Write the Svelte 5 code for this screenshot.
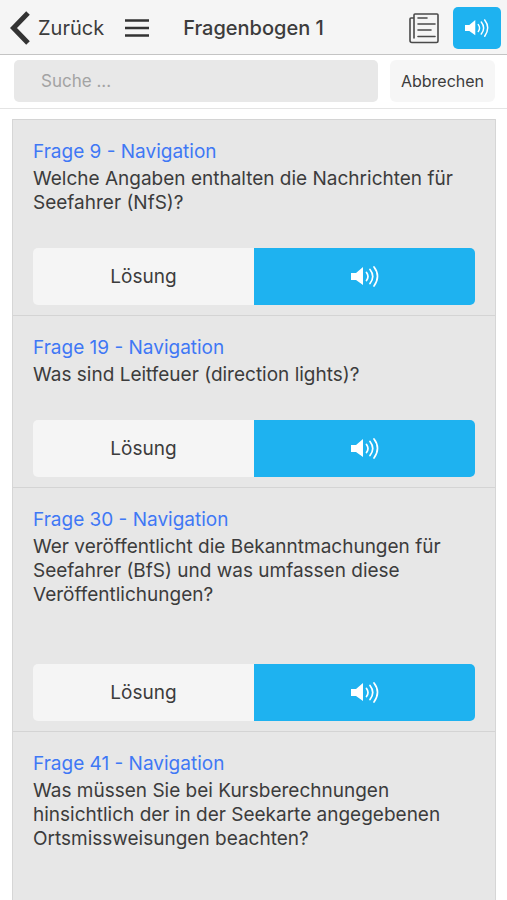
<script>
    let search = $state('');

    const questions = [
        { id: 9, topic: 'Navigation', text: 'Welche Angaben enthalten die Nachrichten für Seefahrer (NfS)?' },
        { id: 19, topic: 'Navigation', text: 'Was sind Leitfeuer (direction lights)?' },
        { id: 30, topic: 'Navigation', text: 'Wer veröffentlicht die Bekanntmachungen für Seefahrer (BfS) und was umfassen diese Veröffentlichungen?\n\n' },
        { id: 41, topic: 'Navigation', text: 'Was müssen Sie bei Kursberechnungen hinsichtlich der in der Seekarte angegebenen Ortsmissweisungen beachten?\n\n' }
    ];

    let visible = $derived(
        questions.filter((q) => q.text.toLowerCase().includes(search.toLowerCase()))
    );
</script>

{#snippet speaker()}
    <svg class="speaker" viewBox="0 0 28 24" aria-hidden="true">
        <path d="M0 8h5l7-6v18l-7-5H0z" fill="#fff" />
        <path d="M15.500 7.500q3 4 0 8M19 4.500q5.500 7 0 14M23 2q7 9 0 19" fill="none" stroke="#fff" stroke-width="1.700" stroke-linecap="round" />
    </svg>
{/snippet}

<div class="page">
    <header>
        <button class="back">
            <svg width="20" height="34" viewBox="0 0 20 34" aria-hidden="true">
                <path d="M18 2 3.500 17 18 32" fill="none" stroke="#333" stroke-width="5" />
            </svg>
            Zurück
        </button>
        <button class="menu" aria-label="Menü">
            <svg width="26" height="20" viewBox="0 0 26 20" aria-hidden="true">
                <path d="M1 2.500h24M1 10h24M1 17.500h24" fill="none" stroke="#333" stroke-width="2.400" />
            </svg>
        </button>
        <h1>Fragenbogen 1</h1>
        <button class="paper" aria-label="Fragebogen">
            <svg width="32" height="32" viewBox="0 0 32 32" aria-hidden="true">
                <g fill="none" stroke="#4a4a4a" stroke-width="1.600" stroke-linecap="round">
                    <path d="M6 26V3q0-1 1-1h22q1 0 1 1v26q0 1.500-1.500 1.500H4Q2 30.500 2 28.500V7q0-1 1-1h3" />
                    <path d="M10 6h9M10 12h17M10 18h13M10 24.500h17" />
                </g>
            </svg>
        </button>
        <button class="sound" aria-label="Vorlesen">{@render speaker()}</button>
    </header>

    <form class="search" onsubmit={(e) => e.preventDefault()}>
        <input type="text" placeholder="Suche ..." aria-label="Suche" bind:value={search} />
        <button type="button" onclick={() => (search = '')}>Abbrechen</button>
    </form>

    <main>
        {#each visible as q (q.id)}
            <article>
                <h2>Frage {q.id} - {q.topic}</h2>
                <p>{q.text}</p>
                <div class="actions">
                    <button class="solution">Lösung</button>
                    <button class="listen" aria-label="Frage {q.id} vorlesen">{@render speaker()}</button>
                </div>
            </article>
        {/each}
    </main>
</div>

<style>
    :global(body) {
        margin: 0;
        background: #fff;
    }
    .page {
        height: 100vh;
        display: flex;
        flex-direction: column;
        overflow: hidden;
        color: #3c3c3c;
        font-family: Inter, "Liberation Sans", sans-serif;
        font-size: 19px;
    }
    button {
        display: flex;
        align-items: center;
        justify-content: center;
        padding: 0;
        border: none;
        background: none;
        color: inherit;
        font: inherit;
        cursor: pointer;
    }
    svg {
        display: block;
    }
    header {
        display: flex;
        align-items: center;
        flex: none;
        height: 52px;
        padding: 2px 6px 0 10px;
        background: #f5f5f5;
        border-bottom: 1px solid #c4c4c4;
    }
    .back {
        gap: 8px;
        font-size: 20px;
    }
    .menu {
        margin-left: 20px;
    }
    h1 {
        flex: 1;
        margin: 0 0 0 33px;
        font-size: 20px;
        font-weight: 500;
    }
    .paper {
        margin-right: 13px;
    }
    .sound {
        width: 48px;
        height: 42px;
        border-radius: 5px;
        background: #1eb2f0;
    }
    .speaker {
        width: 28px;
        height: 24px;
    }
    .sound .speaker {
        width: 24px;
        height: 21px;
    }
    .search {
        display: flex;
        flex: none;
        gap: 12px;
        padding: 5px 12px 6px 14px;
        border-bottom: 1px solid #e4e4e4;
    }
    .search input {
        flex: 1;
        min-width: 0;
        height: 42px;
        box-sizing: border-box;
        padding: 0 27px;
        border: none;
        border-radius: 5px;
        outline: none;
        background: #e8e8e8;
        color: inherit;
        font: inherit;
        font-size: 17px;
    }
    .search input::placeholder {
        color: #a3a3a3;
        opacity: 1;
    }
    .search button {
        width: 105px;
        border-radius: 6px;
        background: #f6f6f6;
        font-size: 16px;
    }
    main {
        flex: 1;
        min-height: 0;
        margin: 10px 11px 0 12px;
        overflow-y: auto;
        scrollbar-width: none;
        background: #e7e7e7;
        border-left: 1px solid #d6d6d6;
        border-right: 1px solid #d6d6d6;
    }
    article {
        padding: 20px 20px 10px;
        border-top: 1px solid #d4d4d4;
    }
    h2 {
        margin: 0 0 3px;
        color: #3f78f5;
        font-size: 19px;
        font-weight: 400;
        line-height: 24px;
    }
    p {
        margin: 0 0 33px;
        line-height: 24px;
        white-space: pre-line;
    }
    .actions {
        display: flex;
        height: 57px;
        border-radius: 5px;
        overflow: hidden;
    }
    .actions button {
        flex: 1;
    }
    .solution {
        background: #f5f5f5;
    }
    .listen {
        background: #1eb2f0;
    }
</style>
